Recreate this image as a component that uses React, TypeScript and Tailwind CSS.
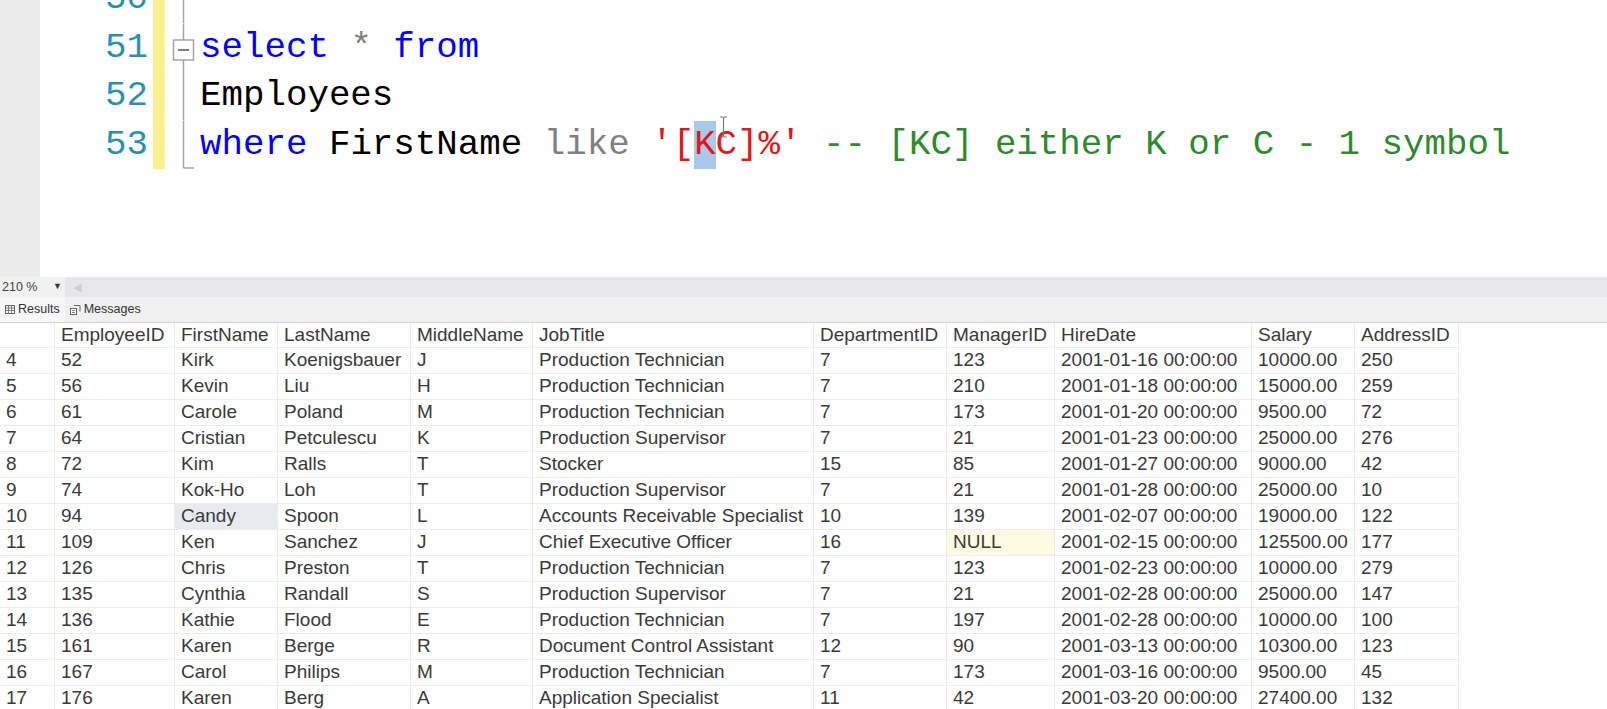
import React from 'react';

type Row = string[];

const cols = ['', 'EmployeeID', 'FirstName', 'LastName', 'MiddleName', 'JobTitle', 'DepartmentID', 'ManagerID', 'HireDate', 'Salary', 'AddressID'];

const rows: Row[] = [
  ['4', '52', 'Kirk', 'Koenigsbauer', 'J', 'Production Technician', '7', '123', '2001-01-16 00:00:00', '10000.00', '250'],
  ['5', '56', 'Kevin', 'Liu', 'H', 'Production Technician', '7', '210', '2001-01-18 00:00:00', '15000.00', '259'],
  ['6', '61', 'Carole', 'Poland', 'M', 'Production Technician', '7', '173', '2001-01-20 00:00:00', '9500.00', '72'],
  ['7', '64', 'Cristian', 'Petculescu', 'K', 'Production Supervisor', '7', '21', '2001-01-23 00:00:00', '25000.00', '276'],
  ['8', '72', 'Kim', 'Ralls', 'T', 'Stocker', '15', '85', '2001-01-27 00:00:00', '9000.00', '42'],
  ['9', '74', 'Kok-Ho', 'Loh', 'T', 'Production Supervisor', '7', '21', '2001-01-28 00:00:00', '25000.00', '10'],
  ['10', '94', 'Candy', 'Spoon', 'L', 'Accounts Receivable Specialist', '10', '139', '2001-02-07 00:00:00', '19000.00', '122'],
  ['11', '109', 'Ken', 'Sanchez', 'J', 'Chief Executive Officer', '16', 'NULL', '2001-02-15 00:00:00', '125500.00', '177'],
  ['12', '126', 'Chris', 'Preston', 'T', 'Production Technician', '7', '123', '2001-02-23 00:00:00', '10000.00', '279'],
  ['13', '135', 'Cynthia', 'Randall', 'S', 'Production Supervisor', '7', '21', '2001-02-28 00:00:00', '25000.00', '147'],
  ['14', '136', 'Kathie', 'Flood', 'E', 'Production Technician', '7', '197', '2001-02-28 00:00:00', '10000.00', '100'],
  ['15', '161', 'Karen', 'Berge', 'R', 'Document Control Assistant', '12', '90', '2001-03-13 00:00:00', '10300.00', '123'],
  ['16', '167', 'Carol', 'Philips', 'M', 'Production Technician', '7', '173', '2001-03-16 00:00:00', '9500.00', '45'],
  ['17', '176', 'Karen', 'Berg', 'A', 'Application Specialist', '11', '42', '2001-03-20 00:00:00', '27400.00', '132'],
];

const FoldMark = ({ kind }: { kind: 'line' | 'box' | 'end' }) => (
  <svg width="35" height="48.5" viewBox="0 0 35 48.5" className="shrink-0">
    {kind === 'line' && <line x1="18.5" y1="0" x2="18.5" y2="48.5" stroke="#a5a5a5" strokeWidth="1.5" />}
    {kind === 'box' && (
      <>
        <line x1="18.5" y1="0" x2="18.5" y2="16" stroke="#a5a5a5" strokeWidth="1.5" />
        <rect x="8.5" y="16" width="20" height="20" fill="#fff" stroke="#a5a5a5" strokeWidth="1.5" />
        <line x1="13" y1="26" x2="24" y2="26" stroke="#555" strokeWidth="1.5" />
        <line x1="18.5" y1="36" x2="18.5" y2="48.5" stroke="#a5a5a5" strokeWidth="1.5" />
      </>
    )}
    {kind === 'end' && (
      <>
        <line x1="18.5" y1="0" x2="18.5" y2="47" stroke="#a5a5a5" strokeWidth="1.5" />
        <line x1="18.5" y1="47" x2="29" y2="47" stroke="#a5a5a5" strokeWidth="1.5" />
      </>
    )}
  </svg>
);

const CodeLine = ({ num, fold, children }: { num: string; fold: 'line' | 'box' | 'end'; children?: React.ReactNode }) => (
  <div className="flex h-[48.5px] items-center">
    <div className="w-[108px] text-right text-[#2b91af]">{num}</div>
    <div className="w-[5px]" />
    <div className="h-full w-[12px] bg-[#f8f08f]" />
    <FoldMark kind={fold} />
    <div className="whitespace-pre">{children}</div>
  </div>
);

export default function App() {
  return (
    <div className="flex h-[709px] w-[1607px] flex-col overflow-hidden bg-white">
      {/* editor */}
      <div className="flex h-[277px] shrink-0 overflow-hidden">
        <div className="w-[40px] shrink-0 bg-[#ececec]" />
        <div className="-mt-[25px] flex flex-col font-['Liberation_Mono',monospace] text-[35.8px] leading-[48.5px]">
          <CodeLine num="50" fold="line" />
          <CodeLine num="51" fold="box">
            <span className="text-[#0000ff]">select</span> <span className="text-[#808080]">*</span> <span className="text-[#0000ff]">from</span>
          </CodeLine>
          <CodeLine num="52" fold="line">
            <span className="text-black">Employees</span>
          </CodeLine>
          <CodeLine num="53" fold="end">
            <span className="text-[#0000ff]">where</span> <span className="text-black">FirstName</span> <span className="text-[#808080]">like</span>{' '}
            <span className="text-[#e01818]">'[</span>
            <span className="inline-block bg-[#a9c9ec] text-[#e01818]">K</span>
            <span className="relative text-[#e01818]">
              C
              <svg width="9" height="22" viewBox="0 0 9 22" className="absolute left-[3px] top-[-8px]">
                <path d="M1 1h3M5 1h3M4.5 1v20M1 21h3M5 21h3" stroke="#777" strokeWidth="1.2" fill="none" />
              </svg>
            </span>
            <span className="text-[#e01818]">]%'</span> <span className="text-[#2f8a2f]">-- [KC] either K or C - 1 symbol</span>
          </CodeLine>
        </div>
      </div>

      {/* zoom bar */}
      <div className="flex h-[20px] shrink-0 items-center bg-[#e7e7e9] font-['Liberation_Sans',Arial,sans-serif] text-[12.5px] text-[#444]">
        <div className="flex h-full w-[65px] items-center justify-between bg-[#f1f1f1] pl-[2px] pr-[3px]">
          <span>210 %</span>
          <span className="text-[9px] text-[#333]">▼</span>
        </div>
        <span className="ml-[8px] text-[11px] text-[#cfcfcf]">◀</span>
      </div>

      {/* tabs */}
      <div className="flex h-[25px] shrink-0 items-center bg-[#f0f0f0] font-['Liberation_Sans',Arial,sans-serif] text-[12.5px] text-[#333]">
        <div className="flex h-full items-center gap-[3px] bg-[#f7f7f7] pl-[5px] pr-[5px]">
          <svg width="10" height="9" viewBox="0 0 10 9">
            <rect x="0.5" y="0.5" width="9" height="8" fill="none" stroke="#666" />
            <path d="M0.5 3h9M0.5 5.5h9M3.5 0.5v8M6.5 0.5v8" stroke="#666" strokeWidth="0.8" />
          </svg>
          <span>Results</span>
        </div>
        <div className="flex h-full items-center gap-[3px] pl-[5px]">
          <svg width="11" height="10" viewBox="0 0 11 10">
            <rect x="0.5" y="3.5" width="6" height="6" fill="#fff" stroke="#666" />
            <path d="M4 0.5h6v6" fill="none" stroke="#666" />
            <path d="M2 5.5h3M2 7.5h3" stroke="#666" strokeWidth="0.8" />
          </svg>
          <span>Messages</span>
        </div>
      </div>

      {/* grid */}
      <div className="border-t border-[#d2d2d2] font-['Liberation_Sans',Arial,sans-serif] text-[19px] leading-[23px] text-[#3a3a3a]">
        <div className="grid w-[1459px] grid-cols-[55px_120px_103px_133px_122px_281px_133px_108px_197px_103px_104px]">
          {cols.map((c, i) => (
            <div key={'h' + i} className="h-[25px] overflow-hidden whitespace-nowrap border-b border-r border-[#ececec] pl-[6px]">
              {c}
            </div>
          ))}
          {rows.map((r, ri) =>
            r.map((v, ci) => {
              let bg = '';
              if (v === 'Candy') bg = 'bg-[#e7eaee] border-[#d5dae0]';
              if (v === 'NULL') bg = 'bg-[#fffbe3]';
              return (
                <div key={ri + '-' + ci} className={`h-[26px] overflow-hidden whitespace-nowrap border-b border-r border-[#ececec] pl-[6px] ${bg}`}>
                  {v}
                </div>
              );
            })
          )}
        </div>
      </div>
    </div>
  );
}
